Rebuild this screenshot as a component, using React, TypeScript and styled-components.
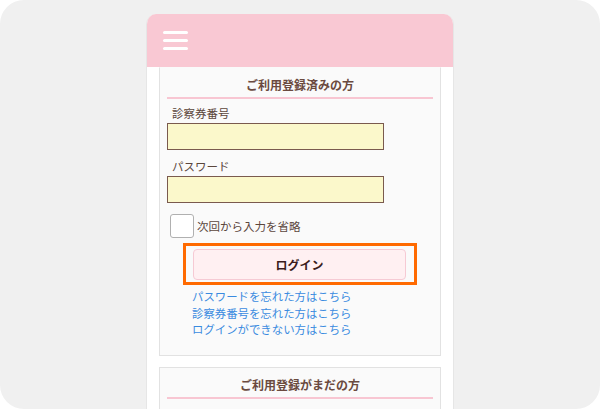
import React, { useState } from 'react';
import styled, { createGlobalStyle } from 'styled-components';

const GlobalStyle = createGlobalStyle`
  html, body {
    margin: 0;
    padding: 0;
    background: #ffffff;
  }
  body {
    font-family: "Noto Sans CJK JP", "Noto Sans", sans-serif;
  }
`;

const Stage = styled.div`
  width: 600px;
  height: 409px;
  background: #f0f0f0;
  border-radius: 24px;
  overflow: hidden;
  display: flex;
  padding: 14px 0 0 146px;
  box-sizing: border-box;
`;

const Phone = styled.div`
  width: 308px;
  height: 100%;
  box-sizing: border-box;
  background: #ffffff;
  border-left: 1px solid #e6e6e6;
  border-right: 1px solid #e6e6e6;
  border-radius: 10px 10px 0 0;
  overflow: hidden;
  display: flex;
  flex-direction: column;
`;

const Header = styled.header`
  height: 53px;
  flex-shrink: 0;
  background: #f9c8d3;
  display: flex;
  align-items: center;
  padding-left: 16px;
`;

const MenuButton = styled.button`
  width: 25px;
  padding: 0;
  border: none;
  background: none;
  display: flex;
  flex-direction: column;
  gap: 5px;
  cursor: pointer;
  span {
    display: block;
    height: 3px;
    border-radius: 2px;
    background: #ffffff;
  }
`;

const Content = styled.main`
  padding: 0 12px;
  display: flex;
  flex-direction: column;
  gap: 11px;
`;

const Panel = styled.section<{ $first?: boolean }>`
  background: #fafafa;
  border: 1px solid #e2e2e2;
  border-top-color: ${(p) => (p.$first ? 'transparent' : '#e2e2e2')};
  padding: 0 7px 17px;
`;

const Title = styled.h2`
  margin: 0;
  padding: 8px 0 3px;
  font-size: 12px;
  line-height: 18px;
  font-weight: 700;
  text-align: center;
  color: #6b4a3f;
  border-bottom: 2px solid #f8c6d2;
`;

const Label = styled.label<{ $gap?: number }>`
  display: block;
  margin: ${(p) => p.$gap ?? 6}px 0 2px 5px;
  font-size: 11.5px;
  line-height: 16px;
  color: #5b463c;
`;

const Field = styled.input`
  display: block;
  width: 217px;
  height: 27px;
  box-sizing: border-box;
  margin: 0;
  background: #fbf8cb;
  border: 1px solid #7a5a4e;
  outline: none;
  font-size: 12px;
`;

const CheckRow = styled.label`
  display: flex;
  align-items: center;
  gap: 3px;
  margin: 11px 0 0 3px;
  font-size: 11.5px;
  color: #5b463c;
`;

const CheckBox = styled.input`
  appearance: none;
  width: 24px;
  height: 24px;
  margin: 0;
  background: #ffffff;
  border: 1px solid #b0b0b0;
  border-radius: 3px;
`;

const FocusFrame = styled.div`
  width: 234px;
  box-sizing: border-box;
  margin: 5px 0 0 16px;
  border: 3px solid #ff6a00;
  padding: 3px 8px 2px 7px;
`;

const LoginButton = styled.button`
  width: 100%;
  height: 31px;
  background: #fff0f2;
  border: 1px solid #f6cad4;
  border-radius: 4px;
  font-family: inherit;
  font-size: 12px;
  font-weight: 700;
  color: #3a1c1c;
  cursor: pointer;
`;

const Links = styled.div`
  margin: 3px 0 0 25px;
  display: flex;
  flex-direction: column;
`;

const HelpLink = styled.a`
  font-size: 11.4px;
  line-height: 16.5px;
  color: #3a8be0;
  text-decoration: none;
`;

function App() {
  const [remember, setRemember] = useState(false);

  return (
    <>
      <GlobalStyle />
      <Stage>
        <Phone>
          <Header>
            <MenuButton aria-label="menu">
              <span />
              <span />
              <span />
            </MenuButton>
          </Header>
          <Content>
            <Panel $first>
              <Title>ご利用登録済みの方</Title>
              <Label htmlFor="card">診察券番号</Label>
              <Field id="card" type="text" />
              <Label htmlFor="pass" $gap={8}>パスワード</Label>
              <Field id="pass" type="password" />
              <CheckRow>
                <CheckBox
                  type="checkbox"
                  checked={remember}
                  onChange={(e) => setRemember(e.target.checked)}
                />
                次回から入力を省略
              </CheckRow>
              <FocusFrame>
                <LoginButton>ログイン</LoginButton>
              </FocusFrame>
              <Links>
                <HelpLink href="#">パスワードを忘れた方はこちら</HelpLink>
                <HelpLink href="#">診察券番号を忘れた方はこちら</HelpLink>
                <HelpLink href="#">ログインができない方はこちら</HelpLink>
              </Links>
            </Panel>
            <Panel>
              <Title>ご利用登録がまだの方</Title>
            </Panel>
          </Content>
        </Phone>
      </Stage>
    </>
  );
}

export default App;
